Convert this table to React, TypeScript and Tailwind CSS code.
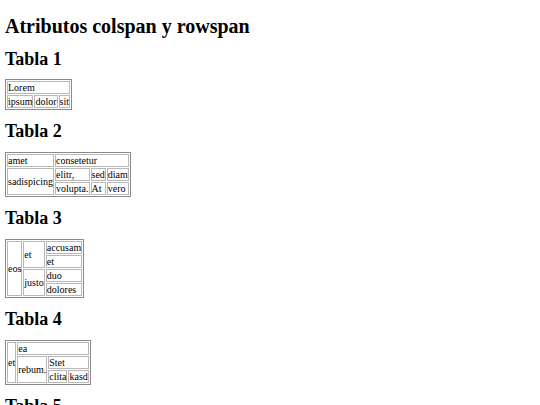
import type { ReactNode } from 'react';

const cellCls =
  'border border-[#b8b8b8] px-0 py-0 text-left align-middle leading-[11px] h-[13px] whitespace-nowrap';

const Td = ({ children, colSpan, rowSpan }: { children: ReactNode; colSpan?: number; rowSpan?: number }) => (
  <td className={cellCls} colSpan={colSpan} rowSpan={rowSpan}>
    {children}
  </td>
);

const Tabla = ({ children }: { children: ReactNode }) => (
  <table className="border border-[#8a8a8a] border-separate border-spacing-[1px] text-[10px] text-black">
    <tbody>{children}</tbody>
  </table>
);

const Titulo = ({ children }: { children: ReactNode }) => (
  <h2 className="text-[18px] leading-[20px] font-bold mt-[11px] mb-[11px]">{children}</h2>
);

export default function App() {
  return (
    <div className="bg-white text-black min-h-[405px] pl-[5px] pt-[12px] [font-family:'Liberation_Serif',serif]">
      <h1 className="text-[20px] leading-[28px] font-bold mb-[9px]">Atributos colspan y rowspan</h1>

      <h2 className="text-[18px] leading-[20px] font-bold mb-[10px]">Tabla 1</h2>
      <Tabla>
        <tr>
          <Td colSpan={3}>Lorem</Td>
        </tr>
        <tr>
          <Td>ipsum</Td>
          <Td>dolor</Td>
          <Td>sit</Td>
        </tr>
      </Tabla>

      <Titulo>Tabla 2</Titulo>
      <Tabla>
        <tr>
          <Td>amet</Td>
          <Td colSpan={3}>consetetur</Td>
        </tr>
        <tr>
          <Td rowSpan={2}>sadispicing</Td>
          <Td>elitr,</Td>
          <Td>sed</Td>
          <Td>diam</Td>
        </tr>
        <tr>
          <Td>volupta.</Td>
          <Td>At</Td>
          <Td>vero</Td>
        </tr>
      </Tabla>

      <Titulo>Tabla 3</Titulo>
      <Tabla>
        <tr>
          <Td rowSpan={4}>eos</Td>
          <Td rowSpan={2}>et</Td>
          <Td>accusam</Td>
        </tr>
        <tr>
          <Td>et</Td>
        </tr>
        <tr>
          <Td rowSpan={2}>justo</Td>
          <Td>duo</Td>
        </tr>
        <tr>
          <Td>dolores</Td>
        </tr>
      </Tabla>

      <Titulo>Tabla 4</Titulo>
      <Tabla>
        <tr>
          <Td rowSpan={3}>et</Td>
          <Td colSpan={3}>ea</Td>
        </tr>
        <tr>
          <Td rowSpan={2}>rebum.</Td>
          <Td colSpan={2}>Stet</Td>
        </tr>
        <tr>
          <Td>clita</Td>
          <Td>kasd</Td>
        </tr>
      </Tabla>

      <Titulo>Tabla 5</Titulo>
    </div>
  );
}
